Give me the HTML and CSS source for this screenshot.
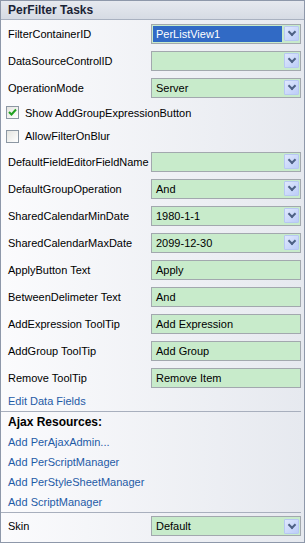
FILE: index.html
```html
<!DOCTYPE html>
<html lang="en">
<head>
    <meta charset="UTF-8">
    <title>PerFilter Tasks</title>
    <link rel="stylesheet" href="styles.css">
</head>
<body>
    <div class="tasks">
        <div class="tasks-title">PerFilter Tasks</div>

        <div class="tasks-body">
            <div class="row">
                <label>FilterContainerID</label>
                <div class="combo selected"><span>PerListView1</span><i class="drop"></i></div>
            </div>
            <div class="row">
                <label>DataSourceControlID</label>
                <div class="combo"><span></span><i class="drop"></i></div>
            </div>
            <div class="row">
                <label>OperationMode</label>
                <div class="combo"><span>Server</span><i class="drop"></i></div>
            </div>

            <div class="check-row first">
                <span class="check on">
                    <svg width="9" height="9" viewBox="0 0 9 9"><path d="M1 4 L3.5 6.5 L8 1.5" fill="none" stroke="#21a121" stroke-width="2"/></svg>
                </span>
                Show AddGroupExpressionButton
            </div>
            <div class="check-row">
                <span class="check"></span>
                AllowFilterOnBlur
            </div>

            <div class="row">
                <label>DefaultFieldEditorFieldName</label>
                <div class="combo"><span></span><i class="drop"></i></div>
            </div>
            <div class="row">
                <label>DefaultGroupOperation</label>
                <div class="combo"><span>And</span><i class="drop"></i></div>
            </div>
            <div class="row">
                <label>SharedCalendarMinDate</label>
                <div class="combo"><span>1980-1-1</span><i class="drop"></i></div>
            </div>
            <div class="row">
                <label>SharedCalendarMaxDate</label>
                <div class="combo"><span>2099-12-30</span><i class="drop"></i></div>
            </div>
            <div class="row">
                <label>ApplyButton Text</label>
                <div class="field">Apply</div>
            </div>
            <div class="row">
                <label>BetweenDelimeter Text</label>
                <div class="field">And</div>
            </div>
            <div class="row">
                <label>AddExpression ToolTip</label>
                <div class="field">Add Expression</div>
            </div>
            <div class="row">
                <label>AddGroup ToolTip</label>
                <div class="field">Add Group</div>
            </div>
            <div class="row">
                <label>Remove ToolTip</label>
                <div class="field">Remove Item</div>
            </div>

            <a class="link-row" href="javascript:;">Edit Data Fields</a>
        </div>

        <div class="tasks-section">
            <div class="section-title">Ajax Resources:</div>
            <a class="link-row" href="javascript:;">Add PerAjaxAdmin...</a>
            <a class="link-row" href="javascript:;">Add PerScriptManager</a>
            <a class="link-row" href="javascript:;">Add PerStyleSheetManager</a>
            <a class="link-row" href="javascript:;">Add ScriptManager</a>
        </div>

        <div class="tasks-section last">
            <div class="row">
                <label>Skin</label>
                <div class="combo"><span>Default</span><i class="drop"></i></div>
            </div>
        </div>
    </div>
</body>
</html>
```

FILE: styles.css
```css
* {
    padding: 0px;
    margin: 0px;
    box-sizing: border-box;
}

body {
    width: 305px;
    height: 543px;
    font-family: "Liberation Sans", Arial, sans-serif;
    font-size: 11px;
    color: #000000;
    background: #ffffff;
}

.tasks {
    width: 305px;
    height: 543px;
    border: 1px solid #8e98aa;
    background: linear-gradient(to right, #fbfbfd, #e6e9ef);
}

.tasks-title {
    height: 19px;
    line-height: 18px;
    padding-left: 7px;
    font-size: 12px;
    font-weight: bold;
    color: #1b2336;
    background: linear-gradient(to bottom, #e6e9ef, #d6dbe4);
    border-bottom: 1px solid #a9b1c0;
}

.row {
    height: 27px;
    display: flex;
    align-items: center;
    padding-left: 7px;
}

.row label {
    width: 143px;
    white-space: nowrap;
}

.combo,
.field {
    width: 150px;
    height: 20px;
    border: 1px solid #a2a8ae;
    background: #c8ebcb;
    display: flex;
    align-items: center;
    padding: 1px;
}

.field {
    padding-left: 4px;
}

.combo span {
    flex: 1;
    height: 16px;
    line-height: 16px;
    padding-left: 3px;
}

.combo.selected span {
    background: #316ac5;
    color: #ffffff;
}

.drop {
    width: 15px;
    height: 15px;
    margin-left: 2px;
    border: 1px solid #b7c8f2;
    border-radius: 1px;
    background: linear-gradient(135deg, #dfe8fd, #bccdf8);
    position: relative;
}

.drop::after {
    content: "";
    position: absolute;
    left: 4px;
    top: 2px;
    width: 4px;
    height: 4px;
    border-right: 2px solid #4d6185;
    border-bottom: 2px solid #4d6185;
    transform: rotate(45deg);
}

.check-row {
    height: 24px;
    display: flex;
    align-items: center;
    padding-left: 5px;
}

.check-row.first {
    height: 23px;
}

.check {
    width: 13px;
    height: 13px;
    margin-right: 6px;
    border: 1px solid #8c97a3;
    background: linear-gradient(135deg, #e4e4e0, #ffffff);
    display: flex;
    align-items: center;
    justify-content: center;
}

.link-row {
    display: block;
    height: 20px;
    line-height: 20px;
    padding-left: 7px;
    color: #1f5ba6;
    text-decoration: none;
}

.tasks-section {
    border-top: 1px solid #a8afbd;
    margin-right: 3px;
}

.tasks-section .link-row {
    margin-right: -3px;
}

.section-title {
    height: 20px;
    line-height: 20px;
    padding-left: 7px;
    font-size: 12px;
    font-weight: bold;
}

.tasks-section.last .row {
    height: 26px;
    margin-right: -3px;
}
```
